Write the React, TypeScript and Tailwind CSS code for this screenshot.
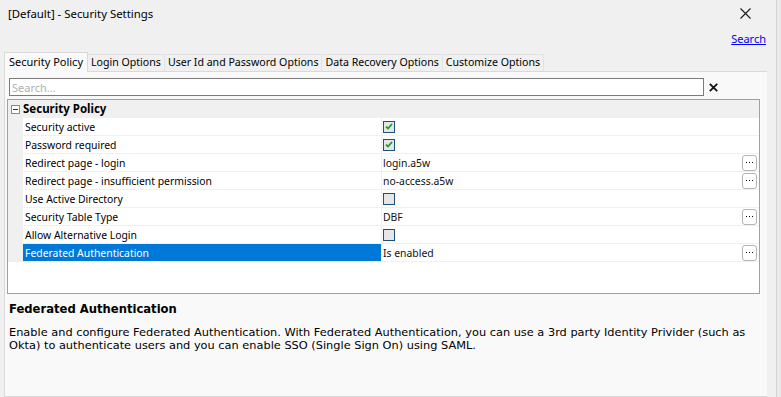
import { useState } from 'react';

type Row = {
  label: string;
  kind: 'check' | 'text';
  value?: string;
  checked?: boolean;
  button?: boolean;
};

const rows: Row[] = [
  { label: 'Security active', kind: 'check', checked: true },
  { label: 'Password required', kind: 'check', checked: true },
  { label: 'Redirect page - login', kind: 'text', value: 'login.a5w', button: true },
  { label: 'Redirect page - insufficient permission', kind: 'text', value: 'no-access.a5w', button: true },
  { label: 'Use Active Directory', kind: 'check', checked: false },
  { label: 'Security Table Type', kind: 'text', value: 'DBF', button: true },
  { label: 'Allow Alternative Login', kind: 'check', checked: false },
  { label: 'Federated Authentication', kind: 'text', value: 'Is enabled', button: true },
];

const tabs = ['Security Policy', 'Login Options', 'User Id and Password Options', 'Data Recovery Options', 'Customize Options'];

function Check({ checked }: { checked?: boolean }) {
  return (
    <span className="flex h-[12px] w-[12px] items-center justify-center border border-[#1c4e80] bg-[#e6e6e6]">
      {checked && (
        <svg width="8" height="7" viewBox="0 0 8 7">
          <path d="M1 3.6 L3 5.5 L7 1" fill="none" stroke="#1f9a2b" strokeWidth="1.8" />
        </svg>
      )}
    </span>
  );
}

function DotsButton() {
  return (
    <span className="flex h-[16px] w-[15px] items-center justify-center gap-[2px] rounded-[3px] border border-[#b4b4b4] bg-white">
      <span className="h-px w-px bg-black" />
      <span className="h-px w-px bg-black" />
      <span className="h-px w-px bg-black" />
    </span>
  );
}

export default function App() {
  const [selected, setSelected] = useState(7);
  const [query, setQuery] = useState('');

  return (
    <div className="flex h-[397px] w-[781px] overflow-hidden bg-[#f0f0f0] font-['Noto_Sans',sans-serif] text-[11px] text-black">
      <div className="flex min-w-0 flex-1 flex-col">
        <div className="flex h-[27px] items-center justify-between pl-[8px] pr-[16px]">
          <span className="text-[11.4px]">[Default] - Security Settings</span>
          <svg width="11" height="11" viewBox="0 0 11 11">
            <path d="M0.5 0.5 L10.5 10.5 M10.5 0.5 L0.5 10.5" stroke="#1a1a1a" strokeWidth="1.1" />
          </svg>
        </div>
        <div className="flex h-[24px] items-center justify-end pr-[1px]">
          <a className="cursor-pointer text-[11px] text-[#0000ee] underline">Search</a>
        </div>
        <div className="flex h-[20px] items-end pl-[4px]">
          {tabs.map((t, i) =>
            i === 0 ? (
              <div key={t} className="relative z-10 -mb-px flex h-[20px] w-[84px] items-center justify-center border border-b-0 border-[#d9d9d9] bg-[#f9f9f9] text-[11px]">
                {t}
              </div>
            ) : (
              <div key={t} className="flex h-[17px] items-center border border-b-0 border-l-0 border-[#e3e3e3] bg-[#f0f0f0] px-[3px] text-[10.6px]">
                {t}
              </div>
            )
          )}
        </div>
        <div className="ml-[4px] flex min-h-0 flex-1 flex-col border border-r-0 border-[#d9d9d9] bg-[#f9f9f9]">
          <div className="flex items-center gap-[5px] pl-[4px] pt-[6px]">
            <input
              value={query}
              onChange={(e) => setQuery(e.target.value)}
              placeholder="Search…"
              className="h-[18px] w-[695px] border border-[#7a7a7a] bg-white px-[2px] font-['Noto_Sans',sans-serif] text-[11px] outline-none placeholder:text-[#b0b0b0]"
            />
            <svg width="9" height="9" viewBox="0 0 9 9">
              <path d="M0.8 0.8 L8.2 8.2 M8.2 0.8 L0.8 8.2" stroke="#111" strokeWidth="1.8" />
            </svg>
          </div>
          <div className="ml-[2px] mr-[7px] mt-[3px] h-[195px] border border-[#a0a0a0] bg-white text-[10.4px]">
            <div className="flex h-[18px] items-center bg-[#f0f0f0]">
              <span className="ml-[3px] flex h-[9px] w-[9px] items-center justify-center border border-[#8a8a8a] bg-white">
                <span className="h-px w-[5px] bg-[#333]" />
              </span>
              <span className="ml-[3px] text-[11.5px] font-bold">Security Policy</span>
            </div>
            <div className="flex">
              <div className="w-[15px] shrink-0 bg-[#f0f0f0]" />
              <div className="flex-1">
                {rows.map((r, i) => (
                  <div key={r.label} onClick={() => setSelected(i)} className="flex h-[18px] border-b border-[#f0f0f0]">
                    <div
                      className={
                        'flex w-[358px] shrink-0 items-center pl-[2px] pt-[2px] ' +
                        (selected === i ? 'bg-[#0078d7] text-white' : '')
                      }
                    >
                      {r.label}
                    </div>
                    <div className="flex flex-1 items-center border-l border-[#f0f0f0] pl-[1px] pr-[2px]">
                      <div className="flex flex-1 items-center">
                        {r.kind === 'check' ? <Check checked={r.checked} /> : <span className="pt-[2px] text-[#111]">{r.value}</span>}
                      </div>
                      {r.button && <DotsButton />}
                    </div>
                  </div>
                ))}
              </div>
            </div>
          </div>
          <div className="px-[4px] pt-[7px]">
            <p className="font-['DejaVu_Sans',sans-serif] text-[11.6px] font-bold">Federated Authentication</p>
            <p className="mt-[8px] font-['DejaVu_Sans',sans-serif] text-[11.35px] leading-[13px]">
              Enable and configure Federated Authentication. With Federated Authentication, you can use a 3rd party Identity Privider (such as
              Okta) to authenticate users and you can enable SSO (Single Sign On) using SAML.
            </p>
          </div>
        </div>
      </div>
      <div className="flex w-[14px] shrink-0">
        <div className="mt-[35px] w-[9px] bg-[#f0f0f0]" />
        <div className="w-[5px] border-l border-[#d4d4d4] bg-[#e9e9e9]" />
      </div>
    </div>
  );
}
